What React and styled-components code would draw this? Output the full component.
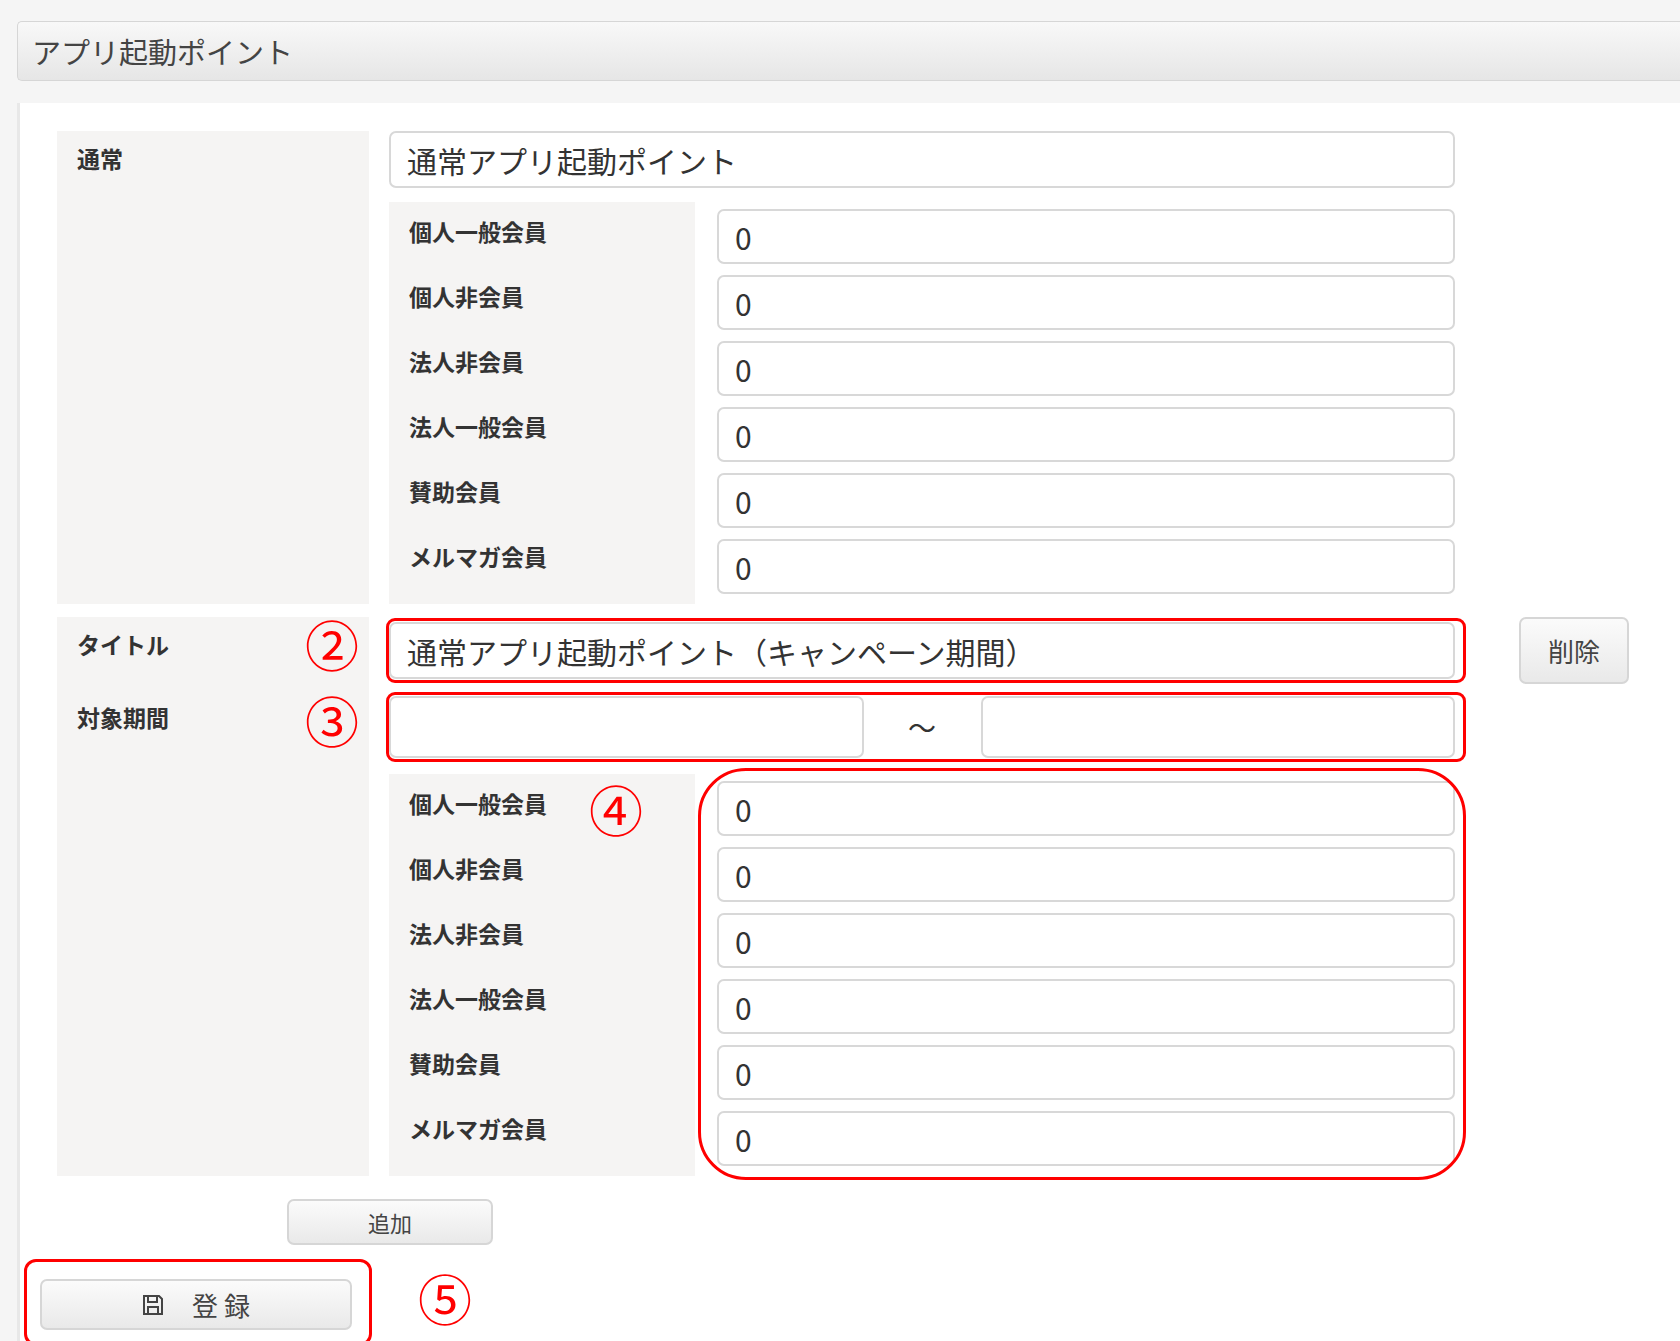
import React from "react";
import styled, { createGlobalStyle } from "styled-components";

const Global = createGlobalStyle`
  html, body { margin: 0; background: #f5f5f5; }
  body { font-family: "Noto Sans CJK JP", "Noto Sans", sans-serif; color: #333; }
`;

const Page = styled.div`
  padding: 21px 0 0 17px;
  min-height: 1341px;
  box-sizing: border-box;
  display: flex;
  flex-direction: column;
`;

const Header = styled.div`
  height: 58px;
  border: 1px solid #d6d6d6;
  border-right: none;
  border-radius: 5px 0 0 5px;
  background: linear-gradient(#f8f8f8, #e6e6e6);
  display: flex;
  align-items: center;
  padding-left: 14px;
  font-size: 29px;
  color: #444;
`;

const Panel = styled.div`
  margin-top: 22px;
  flex: 1;
  background: #fff;
  border-left: 3px solid #e8e8e8;
  padding: 28px 0 20px 37px;
  display: flex;
  flex-direction: column;
`;

const Group = styled.div`
  display: grid;
  grid-template-columns: 312px 1066px auto;
  column-gap: 20px;
  margin-bottom: 13px;
`;

const OuterLabel = styled.div`
  position: relative;
  background: #f5f4f3;
  padding: 10px 20px;
  font-size: 23px;
  font-weight: 700;
`;

const LabelLine = styled.div`
  height: ${p => p.$h}px;
`;

const Main = styled.div`
  display: flex;
  flex-direction: column;
`;

const Input = styled.div`
  box-sizing: border-box;
  height: ${p => p.$h || 55}px;
  border: 2px solid #d8d8d8;
  border-radius: 7px;
  background: #fff;
  display: flex;
  align-items: center;
  padding-left: 16px;
  font-size: 30px;
  color: #333;
  flex: ${p => (p.$grow ? 1 : "none")};
`;

const Marked = styled.div`
  position: relative;
  margin-top: ${p => p.$mt || 0}px;
  &::after {
    content: "";
    position: absolute;
    inset: ${p => p.$inset || "-4px -11px -4px -3px"};
    border: 3px solid #f00;
    border-radius: ${p => p.$radius || 9}px;
    pointer-events: none;
  }
`;

const Num = styled.span`
  position: absolute;
  color: #f00;
  font-size: 54px;
  font-weight: 400;
  line-height: 1;
  font-family: "Noto Sans CJK JP", sans-serif;
  left: ${p => p.$x}px;
  top: ${p => p.$y}px;
`;

const Sub = styled.div`
  position: relative;
  display: grid;
  grid-template-columns: 306px 738px;
  column-gap: 22px;
  margin-top: ${p => p.$mt || 16}px;
`;

const SubLabels = styled.div`
  position: relative;
  background: #f5f4f3;
  padding: 12px 0 0 20px;
  display: flex;
  flex-direction: column;
`;

const SubLabel = styled.div`
  height: 65px;
  font-size: 23px;
  font-weight: 700;
  color: #333;
`;

const Inputs = styled.div`
  display: flex;
  flex-direction: column;
  gap: 11px;
  padding-top: 7px;
`;

const Period = styled.div`
  display: flex;
  align-items: center;
`;

const Tilde = styled.div`
  width: 117px;
  text-align: center;
  font-size: 28px;
`;

const Button = styled.button`
  font-family: inherit;
  border: 2px solid #d6d6d6;
  border-radius: 7px;
  background: linear-gradient(#fbfbfb, #e9e9e9);
  color: #444;
  font-size: ${p => p.$fs || 26}px;
  width: ${p => p.$w}px;
  height: ${p => p.$h}px;
  display: flex;
  align-items: center;
  justify-content: center;
  gap: 28px;
  cursor: pointer;
`;

const DeleteCell = styled.div`
  padding: 0 0 0 44px;
`;

const AddRow = styled.div`
  padding: 10px 0 0 230px;
`;

const SaveRow = styled.div`
  position: relative;
  margin: 34px 0 0 -17px;
  width: 312px;
`;

const Save = () => (
  <svg width="22" height="22" viewBox="0 0 22 22" fill="none" stroke="#444" strokeWidth="2">
    <path d="M2 2h15l3 3v15H2z" />
    <path d="M6 2v6h9V2M6 20v-7h10v7" />
  </svg>
);

const members = ["個人一般会員", "個人非会員", "法人非会員", "法人一般会員", "賛助会員", "メルマガ会員"];

function SubBlock({ mark, mt }) {
  const inputs = (
    <Inputs>
      {members.map(m => (
        <Input key={m}>0</Input>
      ))}
    </Inputs>
  );
  return (
    <Sub $mt={mt}>
      <SubLabels>
        {members.map(m => (
          <SubLabel key={m}>{m}</SubLabel>
        ))}
        {mark && <Num $x={200} $y={8}>④</Num>}
      </SubLabels>
      {mark ? (
        <Marked $inset="-6px -11px -4px -19px" $radius={48}>{inputs}</Marked>
      ) : (
        inputs
      )}
    </Sub>
  );
}

export default function App() {
  return (
    <Page>
      <Global />
      <Header>アプリ起動ポイント</Header>
      <Panel>
        <Group>
          <OuterLabel>通常</OuterLabel>
          <Main>
            <Input $h={57}>通常アプリ起動ポイント</Input>
            <SubBlock mt={14} />
          </Main>
        </Group>
        <Group>
          <OuterLabel>
            <LabelLine $h={73}>タイトル</LabelLine>
            <LabelLine $h={30}>対象期間</LabelLine>
            <Num $x={248} $y={0}>②</Num>
            <Num $x={248} $y={76}>③</Num>
          </OuterLabel>
          <Main>
            <Marked $mt={5}>
              <Input $h={57}>通常アプリ起動ポイント（キャンペーン期間）</Input>
            </Marked>
            <Marked $mt={17}>
              <Period>
                <Input $h={62} $grow />
                <Tilde>～</Tilde>
                <Input $h={62} $grow />
              </Period>
            </Marked>
            <SubBlock mark mt={16} />
          </Main>
          <DeleteCell>
            <Button $w={110} $h={67}>削除</Button>
          </DeleteCell>
        </Group>
        <AddRow>
          <Button $w={206} $h={46} $fs={22}>追加</Button>
        </AddRow>
        <SaveRow>
          <Marked $inset="-20px -20px -16px -16px" $radius={12}>
            <Button $w={312} $h={51} $fs={26}>
              <Save />
              <span>登 録</span>
            </Button>
          </Marked>
          <Num $x={378} $y={-8}>⑤</Num>
        </SaveRow>
      </Panel>
    </Page>
  );
}
